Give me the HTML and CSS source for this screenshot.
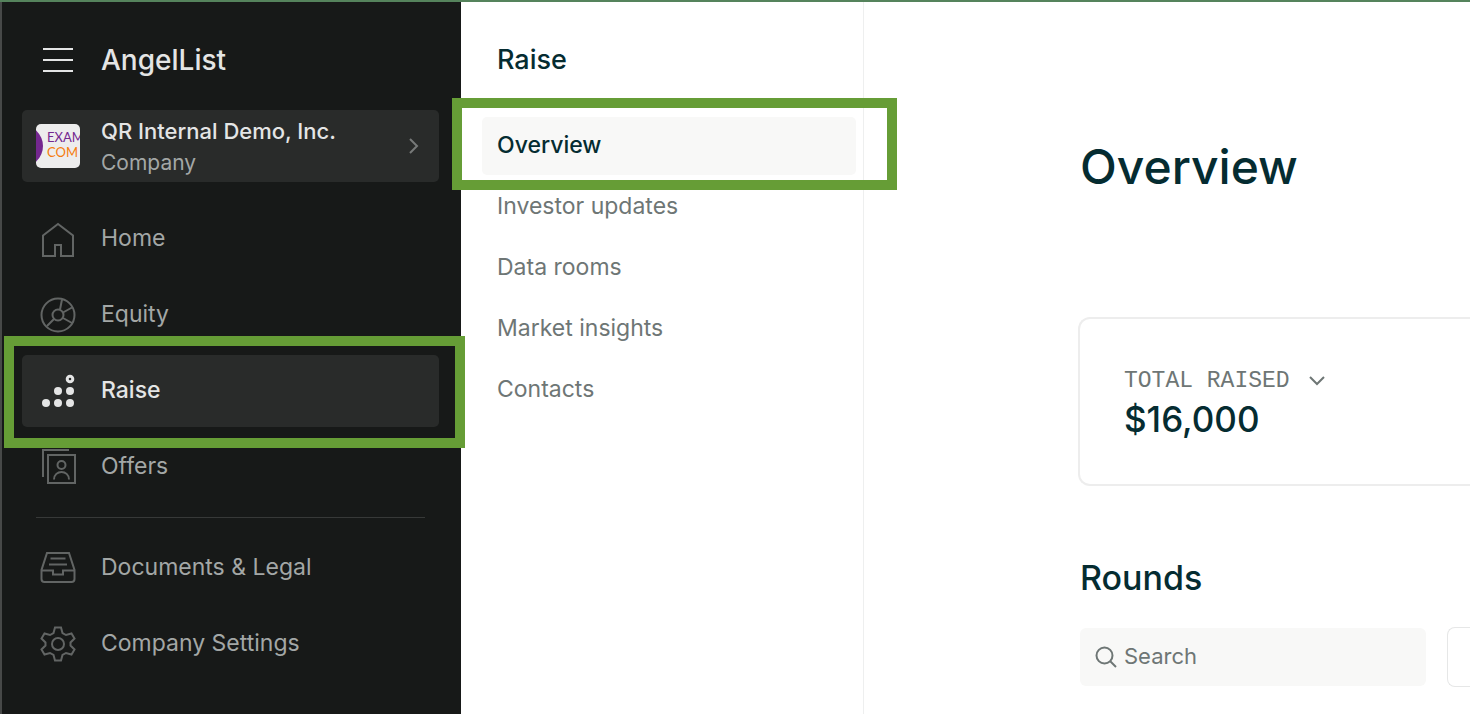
FILE: index.html
```
<!DOCTYPE html>
<html lang="en">
<head>
    <meta charset="UTF-8">
    <meta name="viewport" content="width=device-width, initial-scale=1.0">
    <title>AngelList - Raise</title>
    <link rel="stylesheet" href="styles.css">
</head>
<body>
    <div class="app">
        <aside class="sidebar">
            <div class="brand">
                <button class="menu-button" type="button" aria-label="Menu">
                    <svg class="icon" viewBox="0 0 36 36"><path d="M3 7h30M3 18h30M3 29h30"/></svg>
                </button>
                <a class="brand-name" href="#">AngelList</a>
            </div>

            <button class="company" type="button">
                <svg class="company-logo" viewBox="0 0 44 44">
                    <rect width="44" height="44" fill="#ededed"/>
                    <circle cx="-14" cy="22" r="21" fill="#74278f"/>
                    <text x="11" y="18" fill="#74278f">EXAM</text>
                    <text x="11" y="33" fill="#f57c0c">COM</text>
                </svg>
                <span class="company-text">
                    <span class="company-name">QR Internal Demo, Inc.</span>
                    <span class="company-type">Company</span>
                </span>
                <svg class="company-arrow" viewBox="0 0 12 18"><path d="M2 2l7 7-7 7"/></svg>
            </button>

            <nav class="nav">
                <a class="nav-item" href="#">
                    <svg class="icon" viewBox="0 0 36 36"><path d="M3 14.500L18 3l15 11.500V35H21V24h-6v11H3z"/></svg>
                    <span class="nav-label">Home</span>
                </a>
                <a class="nav-item" href="#">
                    <svg class="icon" viewBox="0 0 36 36">
                        <circle cx="18" cy="18" r="16.500"/>
                        <circle cx="18" cy="18" r="5.500"/>
                        <path d="M20 12.500l2-10M23 15.500l9-5M23 21l9 5M14 22l-7 7"/>
                    </svg>
                    <span class="nav-label">Equity</span>
                </a>
                <a class="nav-item active" href="#">
                    <svg class="icon dots" viewBox="0 0 36 36">
                        <circle cx="6" cy="30" r="4"/>
                        <circle cx="18" cy="30" r="4"/>
                        <circle cx="30" cy="30" r="4"/>
                        <circle cx="18" cy="18" r="4"/>
                        <circle cx="30" cy="18" r="4"/>
                        <circle class="ring" cx="30" cy="6" r="2.800"/>
                    </svg>
                    <span class="nav-label">Raise</span>
                    <span class="highlight"></span>
                </a>
                <a class="nav-item" href="#">
                    <svg class="icon" viewBox="0 0 36 36">
                        <path d="M3 28V1h26"/>
                        <path d="M8 6h27v28H8z"/>
                        <circle cx="21.500" cy="16" r="4"/>
                        <path d="M14 30.500c0-10 15-10 15 0"/>
                    </svg>
                    <span class="nav-label">Offers</span>
                </a>
            </nav>

            <hr class="divider">

            <nav class="nav">
                <a class="nav-item" href="#">
                    <svg class="icon" viewBox="0 0 36 36">
                        <path d="M7 3h22l5.500 17v9a3 3 0 0 1-3 3h-27a3 3 0 0 1-3-3v-9z"/>
                        <path d="M1.500 20.500H13v4h10v-4h11.500M10.500 8.500h15M9 14.500h18"/>
                    </svg>
                    <span class="nav-label">Documents &amp; Legal</span>
                </a>
                <a class="nav-item" href="#">
                    <svg class="icon" viewBox="0 0 36 36">
                        <circle cx="18" cy="18" r="6"/>
                        <path d="M15 1.500h6l1.500 5.500 3.500 2 5.500-1.500 3 5-4 4v3l4 4-3 5-5.500-1.500-3.500 2-1.500 5.500h-6l-1.500-5.500-3.500-2-5.500 1.500-3-5 4-4v-3l-4-4 3-5 5.500 1.500 3.500-2z"/>
                    </svg>
                    <span class="nav-label">Company Settings</span>
                </a>
            </nav>
        </aside>

        <aside class="subnav">
            <h2 class="subnav-title">Raise</h2>
            <nav class="subnav-list">
                <a class="subnav-item active" href="#">Overview<span class="highlight"></span></a>
                <a class="subnav-item" href="#">Investor updates</a>
                <a class="subnav-item" href="#">Data rooms</a>
                <a class="subnav-item" href="#">Market insights</a>
                <a class="subnav-item" href="#">Contacts</a>
            </nav>
        </aside>

        <main class="content">
            <h1 class="page-title">Overview</h1>

            <section class="card">
                <button class="metric-label" type="button">
                    TOTAL RAISED
                    <svg class="chevron" viewBox="0 0 18 12"><path d="M2 2l7 7 7-7"/></svg>
                </button>
                <div class="metric-value">$16,000</div>
            </section>

            <h2 class="section-title">Rounds</h2>
            <div class="toolbar">
                <label class="search">
                    <svg class="search-icon" viewBox="0 0 22 22"><circle cx="9.500" cy="9.500" r="8"/><path d="M15 15l6 6"/></svg>
                    <input type="search" placeholder="Search" aria-label="Search">
                </label>
                <button class="filter" type="button" aria-label="Filter"></button>
            </div>
        </main>
    </div>
</body>
</html>
```
FILE: styles.css
```
* {
    margin: 0;
    padding: 0;
    box-sizing: border-box;
}

body {
    font-family: Inter, "Liberation Sans", sans-serif;
    font-size: 22px;
    color: #6e7675;
    background: white;
}

a {
    color: inherit;
    text-decoration: none;
}

button {
    font: inherit;
    color: inherit;
    background: none;
    border: none;
    text-align: left;
}

svg {
    display: block;
    flex-shrink: 0;
    fill: none;
    stroke: currentColor;
    stroke-width: 2;
}

.app {
    display: flex;
    min-height: 100vh;
    border-top: 2px solid #55835c;
}

/* Sidebar */
.sidebar {
    flex: 0 0 461px;
    padding: 22px 22px 32px 20px;
    border-left: 2px solid #474948;
    background: #171918;
    color: #a3a7a6;
}

.brand {
    display: flex;
    align-items: center;
    gap: 25px;
    height: 72px;
    padding-left: 18px;
    margin-bottom: 14px;
    color: #e4e5e5;
}

.brand-name {
    font-size: 28px;
    font-weight: 500;
}

.icon {
    width: 36px;
    height: 36px;
}

.company {
    display: flex;
    align-items: center;
    width: 100%;
    height: 72px;
    padding: 0 19px 0 14px;
    margin-bottom: 21px;
    border-radius: 5px;
    background: #292b2a;
}

.company-logo {
    width: 44px;
    height: 44px;
    margin-right: 21px;
    border-radius: 5px;
    font-family: Lato, sans-serif;
    font-size: 13px;
    stroke: none;
}

.company-text {
    flex: 1;
    padding-top: 2px;
}

.company-name,
.company-type {
    display: block;
    line-height: 32px;
}

.company-name {
    font-weight: 500;
    color: #e4e5e5;
}

.company-type {
    font-size: 21px;
}

.company-arrow {
    width: 12px;
    height: 18px;
    color: #777a79;
}

.nav {
    display: flex;
    flex-direction: column;
    gap: 4px;
}

.nav-item {
    position: relative;
    display: flex;
    align-items: center;
    gap: 25px;
    height: 72px;
    padding-left: 18px;
    border-radius: 5px;
    font-size: 23px;
}

.nav-label {
    padding-bottom: 2px;
}

.nav-item .icon {
    color: #626564;
}

.nav-item.active {
    z-index: 1;
    background: #292b2a;
    color: #e4e5e5;
    font-weight: 500;
}

.nav-item .dots {
    color: #e4e5e5;
    fill: currentColor;
    stroke: none;
}

.dots .ring {
    fill: none;
    stroke: currentColor;
    stroke-width: 3;
}

.divider {
    height: 1px;
    margin: 14px;
    border: none;
    background: #373938;
}

/* Green frames around the active steps */
.highlight {
    position: absolute;
    border: 10px solid #669d36;
    pointer-events: none;
}

.nav-item .highlight {
    inset: -19px -26px -21px -18px;
}

.subnav-item .highlight {
    inset: -19px -41px -15px -30px;
}

/* Second level menu */
.subnav {
    flex: 0 0 403px;
    padding: 22px 7px 32px 21px;
    border-right: 1px solid #eeefef;
}

.subnav-title {
    padding-left: 15px;
    margin-bottom: 21px;
    font-size: 27px;
    font-weight: 500;
    line-height: 72px;
    color: #052c31;
}

.subnav-list {
    display: flex;
    flex-direction: column;
    gap: 3px;
}

.subnav-item {
    position: relative;
    padding: 0 15px 2px;
    border-radius: 5px;
    font-size: 23px;
    line-height: 56px;
}

.subnav-item.active {
    background: #f8f8f7;
    color: #052c31;
    font-weight: 500;
}

/* Page */
.content {
    flex: 1;
    min-width: 0;
    padding: 125px 0 28px 216px;
    color: #052c31;
}

.page-title {
    margin-bottom: 110px;
    font-size: 48px;
    font-weight: 500;
    line-height: 80px;
}

.card {
    margin-left: -2px;
    padding: 44px;
    border: 2px solid #ededed;
    border-right: none;
    border-radius: 12px 0 0 12px;
}

.metric-label {
    display: flex;
    align-items: center;
    gap: 18px;
    font-family: "Liberation Mono", monospace;
    font-size: 23px;
    line-height: 36px;
    color: #6e7675;
}

.chevron {
    width: 18px;
    height: 12px;
}

.metric-value {
    font-size: 35px;
    font-weight: 500;
    line-height: 41px;
}

.section-title {
    margin: 64px 0 21px;
    font-size: 34px;
    font-weight: 500;
    line-height: 56px;
}

.toolbar {
    display: flex;
    align-items: center;
    gap: 21px;
}

.search {
    display: flex;
    flex: 0 0 346px;
    align-items: center;
    gap: 7px;
    min-width: 0;
    height: 58px;
    padding: 0 15px;
    border-radius: 6px;
    background: #f8f8f7;
    color: #6e7675;
}

.search-icon {
    width: 22px;
    height: 22px;
}

.search input {
    flex: 1;
    min-width: 0;
    padding-bottom: 2px;
    border: none;
    outline: none;
    background: none;
    font: inherit;
    color: inherit;
}

.search input::placeholder {
    color: #6e7675;
}

.filter {
    flex: 1;
    height: 60px;
    border: 1px solid #e6e7e7;
    border-right: none;
    border-radius: 8px 0 0 8px;
}
```
